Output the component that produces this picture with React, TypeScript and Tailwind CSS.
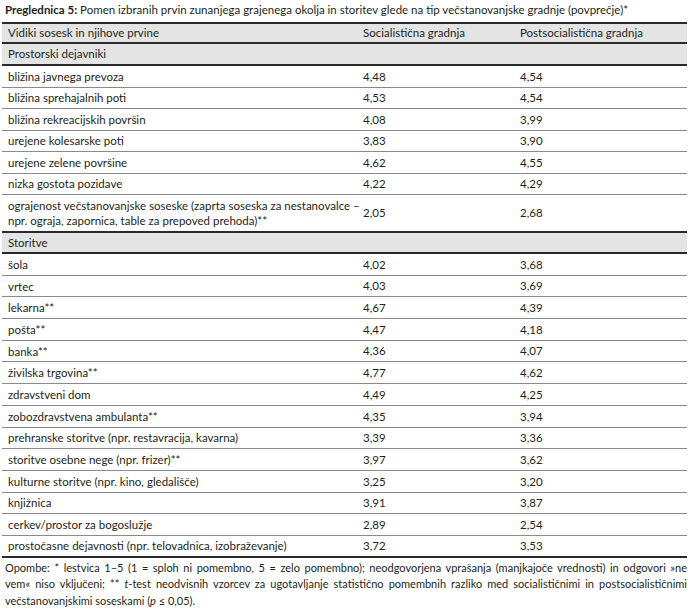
import React from "react";

type Row = { label: React.ReactNode; a?: string; b?: string };

const rows1: Row[] = [
  { label: "bližina javnega prevoza", a: "4,48", b: "4,54" },
  { label: "bližina sprehajalnih poti", a: "4,53", b: "4,54" },
  { label: "bližina rekreacijskih površin", a: "4,08", b: "3,99" },
  { label: "urejene kolesarske poti", a: "3,83", b: "3,90" },
  { label: "urejene zelene površine", a: "4,62", b: "4,55" },
  { label: "nizka gostota pozidave", a: "4,22", b: "4,29" },
];

const rows2: Row[] = [
  { label: "šola", a: "4,02", b: "3,68" },
  { label: "vrtec", a: "4,03", b: "3,69" },
  { label: "lekarna**", a: "4,67", b: "4,39" },
  { label: "pošta**", a: "4,47", b: "4,18" },
  { label: "banka**", a: "4,36", b: "4,07" },
  { label: "živilska trgovina**", a: "4,77", b: "4,62" },
  { label: "zdravstveni dom", a: "4,49", b: "4,25" },
  { label: "zobozdravstvena ambulanta**", a: "4,35", b: "3,94" },
  { label: "prehranske storitve (npr. restavracija, kavarna)", a: "3,39", b: "3,36" },
  { label: "storitve osebne nege (npr. frizer)**", a: "3,97", b: "3,62" },
  { label: "kulturne storitve (npr. kino, gledališče)", a: "3,25", b: "3,20" },
  { label: "knjižnica", a: "3,91", b: "3,87" },
  { label: "cerkev/prostor za bogoslužje", a: "2,89", b: "2,54" },
  { label: "prostočasne dejavnosti (npr. telovadnica, izobraževanje)", a: "3,72", b: "3,53" },
];

function DataRow({ r, h, dark }: { r: Row; h: string; dark?: boolean }) {
  return (
    <div
      className={`grid grid-cols-[355px_157px_1fr] items-center ${h} ${
        dark ? "border-b-2 border-[#2a2a2a]" : "border-b border-[#8a8a8a]"
      }`}
    >
      <div className="pl-[6px] leading-[15px] whitespace-nowrap">{r.label}</div>
      <div className="pl-[6px]">{r.a}</div>
      <div className="pl-[6px]">{r.b}</div>
    </div>
  );
}

export default function App() {
  return (
    <div
      className="w-[695px] h-[615px] bg-white text-[#231f20] text-[11.5px] overflow-hidden"
      style={{ fontFamily: "Lato, 'Liberation Sans', sans-serif" }}
    >
      <div className="h-[22px] pl-[5px] pt-[3px] leading-[14px] whitespace-nowrap">
        <span className="font-bold">Preglednica 5:</span> Pomen izbranih prvin zunanjega grajenega okolja in storitev glede na tip večstanovanjske gradnje (povprečje)*
      </div>
      <div className="ml-[2px] w-[685px]">
        <div className="grid grid-cols-[355px_157px_1fr] items-center h-[22px] bg-[#e4e4e4] border-t-2 border-b-2 border-[#2a2a2a]">
          <div className="pl-[6px]">Vidiki sosesk in njihove prvine</div>
          <div className="pl-[6px]">Socialistična gradnja</div>
          <div className="pl-[6px]">Postsocialistična gradnja</div>
        </div>
        <div className="flex items-center h-[22px] bg-[#e4e4e4] border-b-2 border-[#2a2a2a] pl-[6px]">
          Prostorski dejavniki
        </div>
        {rows1.map((r, i) => (
          <DataRow key={i} r={r} h="h-[21.5px]" />
        ))}
        <DataRow
          r={{
            label: (
              <>
                ograjenost večstanovanjske soseske (zaprta soseska za nestanovalce –<br />
                npr. ograja, zapornica, table za prepoved prehoda)**
              </>
            ),
            a: "2,05",
            b: "2,68",
          }}
          h="h-[38px]"
          dark
        />
        <div className="flex items-center h-[21px] bg-[#e4e4e4] border-b-2 border-[#2a2a2a] pl-[6px]">
          Storitve
        </div>
        {rows2.map((r, i) => (
          <DataRow key={i} r={r} h="h-[21.7px]" dark={i === rows2.length - 1} />
        ))}
      </div>
      <div className="pl-[5px] pr-[8px] pt-[2px] leading-[16.5px] text-[11px]">
        <div className="text-justify [text-align-last:justify] whitespace-nowrap">
          Opombe: * lestvica 1–5 (1 = sploh ni pomembno, 5 = zelo pomembno); neodgovorjena vprašanja (manjkajoče vrednosti) in odgovori »ne
        </div>
        <div className="text-justify [text-align-last:justify]">
          vem« niso vključeni; ** <i>t</i>-test neodvisnih vzorcev za ugotavljanje statistično pomembnih razliko med socialističnimi in postsocialističnimi
        </div>
        <div>
          večstanovanjskimi soseskami (<i>p</i> ≤ 0,05).
        </div>
      </div>
    </div>
  );
}
